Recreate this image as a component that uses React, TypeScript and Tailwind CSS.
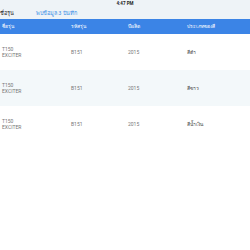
import React from "react";

const rows = [
  { name: ["T150", "EXCITER"], code: "B151", year: "2015", color: "สีดำ" },
  { name: ["T150", "EXCITER"], code: "B151", year: "2015", color: "สีขาว" },
  { name: ["T150", "EXCITER"], code: "B151", year: "2015", color: "สีน้ำเงิน" },
];

export default function App() {
  return (
    <div
      className="w-[250px] h-[250px] bg-white overflow-hidden"
      style={{ fontFamily: 'Roboto, "Liberation Sans", sans-serif' }}
    >
      <div className="bg-[#eef3f7]">
        <div className="h-[8px] flex items-center justify-center text-[4.5px] font-bold text-[#222] leading-none pt-[1px]">
          4:47 PM
        </div>
        <div className="h-[11px] flex items-center text-[5.5px] leading-none">
          <span className="w-[36px] text-[#222]">ชื่อรุ่น</span>
          <span className="text-[#3a8ee6]">พบข้อมูล 3 บันทึก</span>
        </div>
      </div>
      <div className="h-[15px] bg-[#3b84e6] grid grid-cols-[69px_57px_59px_1fr] items-center pl-[2px] text-white text-[5px] leading-none">
        <span>ชื่อรุ่น</span>
        <span>รหัสรุ่น</span>
        <span>ปีผลิต</span>
        <span>ประเภทของสี</span>
      </div>
      {rows.map((r, i) => (
        <div
          key={i}
          className={`h-[36px] grid grid-cols-[69px_57px_59px_1fr] items-center pl-[2px] text-[5px] leading-[6px] text-[#777] ${
            i === 1 ? "bg-[#f3f8fa]" : "bg-white"
          }`}
        >
          <div className="flex flex-col">
            <span>{r.name[0]}</span>
            <span>{r.name[1]}</span>
          </div>
          <span>{r.code}</span>
          <span>{r.year}</span>
          <span className="text-[#444]">{r.color}</span>
        </div>
      ))}
    </div>
  );
}
